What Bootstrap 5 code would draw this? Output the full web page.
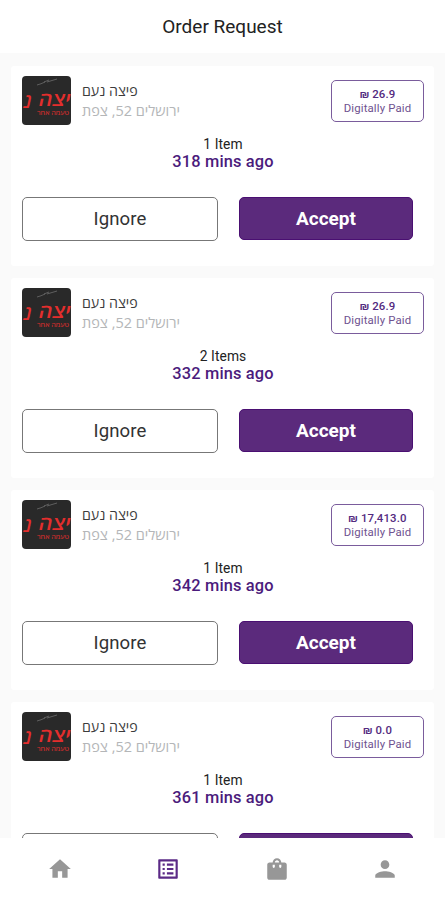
<!DOCTYPE html>
<html lang="en">
<head>
<meta charset="utf-8">
<meta name="viewport" content="width=device-width, initial-scale=1">
<title>Order Request</title>
<link href="https://cdn.jsdelivr.net/npm/bootstrap@5.3.0/dist/css/bootstrap.min.css" rel="stylesheet">
<style>
body{font-family:Roboto,"Open Sans","Liberation Sans",sans-serif;background:#fafafa;color:#222}
.screen{height:900px}
.top-title{height:53px;padding-top:2px;font-size:19px;letter-spacing:0;color:#222}
.orders{padding:13px 11px 0;gap:12px;min-height:0}
.order{height:200px;padding:10px 10px 0 11px;border-radius:3px}
.thumb{width:49px;height:49px;border-radius:4px}
.who{margin-left:11px;padding-top:5px}
.shop{font-family:"Open Sans","Liberation Sans",sans-serif;font-size:14.2px;line-height:20px;color:#3c3c3c}
.addr{font-family:"Open Sans","Liberation Sans",sans-serif;font-size:14.5px;line-height:20px;color:#b4b6b8}
.paid{width:93px;height:42px;margin-top:4px;padding-bottom:1px;border:1px solid #7a5c9c;border-radius:5px;font-size:11.4px;line-height:14px;letter-spacing:.15px;color:#6f5290}
.paid .sum{font-weight:500;color:#532a80}
.meta{margin-top:11px;line-height:17px}
.count{font-size:13.8px;letter-spacing:.1px}
.ago{font-size:16.4px;font-weight:500;letter-spacing:.15px;color:#4b1b7c}
.actions{margin-top:27px;gap:21px}
.btn-skip,.btn-take{height:44px;font-size:18.6px;border-radius:5px;line-height:1;padding:0}
.btn-skip{width:196px;border:1px solid #777;color:#333;letter-spacing:.1px}
.btn-take{width:174px;height:43px;background:#5b2a7c;border:1px solid #4a0f72;color:#fff;font-weight:700;font-size:19px}
.tabs{height:62px;color:#979797;padding:0 6px}
.tabs svg{width:26px;height:26px;fill:currentColor}
.tabs .on{color:#5b2a86}
</style>
</head>
<body>
<div class="screen d-flex flex-column overflow-hidden">
<header class="top-title bg-white d-flex align-items-center justify-content-center flex-shrink-0">Order Request</header>
<main id="orders" class="orders d-flex flex-column flex-grow-1 overflow-hidden"></main>
<nav class="tabs bg-white row g-0 align-items-center text-center flex-shrink-0">
<a class="col text-reset" href="#" aria-label="Home"><svg viewBox="0 0 24 24"><path d="M10 20v-6h4v6h5v-8h3L12 3 2 12h3v8z"/></svg></a>
<a class="col on" href="#" aria-label="Orders"><svg viewBox="0 0 24 24"><path d="M19 5v14H5V5h14m1.100-2H3.900c-.5 0-.9.400-.9.900v16.200c0 .400.400.900.900.900h16.200c.400 0 .900-.500.900-.900V3.900c0-.500-.500-.900-.900-.900zM11 7h6v2h-6V7zm0 4h6v2h-6v-2zm0 4h6v2h-6zM7 7h2v2H7zm0 4h2v2H7zm0 4h2v2H7z"/></svg></a>
<a class="col text-reset" href="#" aria-label="Items"><svg viewBox="0 0 24 24"><path fill-rule="evenodd" d="M19 6h-3c0-2.200-1.800-4-4-4S8 3.800 8 6H5c-1.100 0-2 .9-2 2v12c0 1.100.9 2 2 2h14c1.100 0 2-.9 2-2V8c0-1.100-.9-2-2-2zM10 10a1 1 0 0 1-2 0V8h2zM12 4c1.100 0 2 .9 2 2h-4c0-1.100.9-2 2-2zM16 10a1 1 0 0 1-2 0V8h2z"/></svg></a>
<a class="col text-reset" href="#" aria-label="Profile"><svg viewBox="0 0 24 24"><path d="M12 12c2.210 0 4-1.790 4-4s-1.790-4-4-4-4 1.790-4 4 1.790 4 4 4zm0 2c-2.670 0-9 1.340-9 4v2h18v-2c0-2.660-6.330-4-9-4z"/></svg></a>
</nav>
</div>
<template id="order-card">
<article class="order bg-white flex-shrink-0">
<div class="d-flex align-items-start">
<svg class="thumb flex-shrink-0" viewBox="0 0 49 49"><rect width="49" height="49" fill="#292929"/><path d="M15 9q4-1 8-3m2 0l10-3M22 6l5-2" stroke="#777" stroke-width=".7" fill="none"/><g fill="#e32e2d" font-family="Open Sans,Liberation Sans,sans-serif" font-weight="600"><text transform="translate(15.500 30) skewX(-12)" font-size="19" textLength="32" lengthAdjust="spacingAndGlyphs">יצה</text><text transform="translate(0 32) skewX(-12)" font-size="20" textLength="8" lengthAdjust="spacingAndGlyphs">נ</text><text x="15" y="38.500" font-size="6" font-weight="400" textLength="32" lengthAdjust="spacingAndGlyphs">טעמה אחר</text></g></svg>
<div class="who flex-grow-1 text-start">
<div class="shop"><bdi class="shop-name">פיצה נעם</bdi></div>
<div class="addr"><bdi class="address">ירושלים 52, צפת</bdi></div>
</div>
<div class="paid d-flex flex-column align-items-center justify-content-center text-nowrap"><span class="sum"></span><span>Digitally Paid</span></div>
</div>
<div class="meta text-center"><div class="count"></div><div class="ago"></div></div>
<div class="actions d-flex"><button class="btn btn-skip">Ignore</button><button class="btn btn-take">Accept</button></div>
</article>
</template>
<script src="https://cdn.jsdelivr.net/npm/bootstrap@5.3.0/dist/js/bootstrap.bundle.min.js"></script>
<script>
const list = document.getElementById('orders'), card = document.getElementById('order-card');
[['26.9','1 Item',318],['26.9','2 Items',332],['17,413.0','1 Item',342],['0.0','1 Item',361]].forEach(([sum, count, mins]) => {
  const c = card.content.cloneNode(true);
  c.querySelector('.sum').textContent = '₪ ' + sum;
  c.querySelector('.sum').dir = 'ltr';
  c.querySelector('.count').textContent = count;
  c.querySelector('.ago').textContent = mins + ' mins ago';
  list.append(c);
});
</script>
</body>
</html>
